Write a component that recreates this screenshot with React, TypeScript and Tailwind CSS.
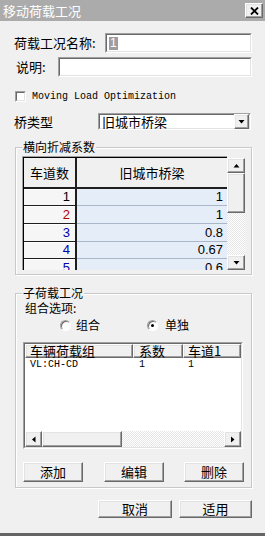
const cjk = "font-['Noto_Sans_CJK_SC',sans-serif]";
const mono = "font-['Liberation_Mono','Noto_Sans_CJK_SC',monospace]";
const arial = "font-['Liberation_Sans',Arial,sans-serif]";

const raised =
  'border border-t-white border-l-white border-r-[#696969] border-b-[#696969] shadow-[inset_-1px_-1px_0_#a0a0a0,inset_1px_1px_0_#e3e3e3] bg-[#f0f0f0]';
const sunkenOuter = 'border border-t-[#a0a0a0] border-l-[#a0a0a0] border-r-white border-b-white';
const sunkenInner = 'border border-t-[#696969] border-l-[#696969] border-r-[#e3e3e3] border-b-[#e3e3e3]';
const track =
  'bg-[repeating-conic-gradient(#ffffff_0%_25%,#e6e6e6_0%_50%)] bg-[length:2px_2px]';

function Arrow({ dir }: { dir: 'up' | 'down' | 'left' | 'right' }) {
  const d = {
    up: 'M0.5 4.5 L3.5 1 L6.5 4.5 Z',
    down: 'M0.5 1 L3.5 4.5 L6.5 1 Z',
    left: 'M4.5 0.5 L1 3.5 L4.5 6.5 Z',
    right: 'M1 0.5 L4.5 3.5 L1 6.5 Z',
  }[dir];
  const v = dir === 'up' || dir === 'down';
  return (
    <svg width={v ? 7 : 5} height={v ? 5 : 7} viewBox={v ? '0 0 7 5' : '0 0 5 7'}>
      <path d={d} fill="black" />
    </svg>
  );
}

function Sunken({ className, children }: { className: string; children?: React.ReactNode }) {
  return (
    <div className={`${sunkenOuter} ${className}`}>
      <div className={`${sunkenInner} w-full h-full bg-white relative`}>{children}</div>
    </div>
  );
}

function Radio({ checked }: { checked?: boolean }) {
  return (
    <div className="w-[11px] h-[11px] rounded-full border border-t-[#a0a0a0] border-l-[#a0a0a0] border-r-white border-b-white bg-white flex items-center justify-center shadow-[inset_1px_1px_0_#696969]">
      {checked && <div className="w-[3px] h-[3px] rounded-full bg-black" />}
    </div>
  );
}

const rows = [
  { n: '1', v: '1', c: 'text-black', h: 'h-[17px]' },
  { n: '2', v: '1', c: 'text-[#b00000]', h: 'h-[18px]' },
  { n: '3', v: '0.8', c: 'text-[#0000b0]', h: 'h-[18px]' },
  { n: '4', v: '0.67', c: 'text-[#0000b0]', h: 'h-[17px]' },
  { n: '5', v: '0.6', c: 'text-[#0000b0]', h: 'h-[18px]' },
];

export default function App() {
  return (
    <div className={`w-[265px] h-[536px] bg-[#f0f0f0] flex flex-col overflow-hidden text-black ${cjk}`}>
      {/* title bar */}
      <div className="h-[21px] shrink-0 bg-[#ababab] flex items-center justify-between pl-[3px] pr-[2px]">
        <span className="text-white text-[13px] leading-[21px]">移动荷载工况</span>
        <div className={`w-[18px] h-[15px] ${raised} flex items-center justify-center`}>
          <svg width="9" height="8" viewBox="0 0 9 8">
            <path d="M1 0.5 L8 7.5 M8 0.5 L1 7.5" stroke="black" strokeWidth="1.8" />
          </svg>
        </div>
      </div>

      {/* name */}
      <div className="flex items-center h-[20px] mt-[12px]">
        <span className="w-[105px] pl-[14px] shrink-0 whitespace-nowrap text-[13px] leading-[20px]">荷载工况名称:</span>
        <Sunken className="w-[147px] h-[20px]">
          <div className="h-full flex items-center pl-[2px]">
            <span className={`bg-[#9d9d9d] text-white text-[12px] leading-[13px] px-[1px] ${arial}`}>1</span>
          </div>
        </Sunken>
      </div>

      {/* description */}
      <div className="flex items-center h-[20px] mt-[4px]">
        <span className="w-[58px] pl-[16px] shrink-0 whitespace-nowrap text-[13px] leading-[20px]">说明:</span>
        <Sunken className="w-[194px] h-[20px]" />
      </div>

      {/* checkbox */}
      <div className="flex items-center h-[11px] mt-[14px]">
        <Sunken className="ml-[15px] w-[11px] h-[11px]" />
        <span className={`ml-[6px] text-[10px] leading-[11px] ${mono}`}>Moving Load Optimization</span>
      </div>

      {/* bridge type */}
      <div className="flex items-center h-[17px] mt-[11px]">
        <span className="w-[98px] pl-[14px] shrink-0 text-[13px] leading-[17px]">桥类型</span>
        <Sunken className="w-[153px] h-[17px]">
          <div className="h-full flex items-center justify-between">
            <span className="pl-[2px] text-[13px] leading-[15px]">旧城市桥梁</span>
            <div className={`w-[15px] h-[15px] ${raised} flex items-center justify-center`}>
              <Arrow dir="down" />
            </div>
          </div>
        </Sunken>
      </div>

      {/* lateral reduction factors */}
      <div className="relative mt-[17px] ml-[15px] w-[237px] h-[128px] shrink-0 border border-[#c8c8c8] shadow-[inset_1px_1px_0_#ffffff,1px_1px_0_#ffffff]">
        <span className="absolute -top-[8px] left-[6px] bg-[#f0f0f0] px-[1px] text-[12px] leading-[14px]">横向折减系数</span>
        <div className="mt-[8px] ml-[6px] flex w-[223px] h-[114px]">
          <div className="w-[205px] h-[114px] border-l border-t border-[#a0a0a0] overflow-hidden">
            <div className="border-l border-t border-black h-full">
              <div className="flex h-[31px]">
                <div className="w-[53px] bg-[#f0f0f0] border-r-2 border-b-2 border-[#1e1e1e] flex items-center justify-center text-[13px]">
                  车道数
                </div>
                <div className="flex-1 bg-[#f0f0f0] border-b-2 border-[#1e1e1e] flex items-center justify-center text-[13px]">
                  旧城市桥梁
                </div>
              </div>
              {rows.map(r => (
                <div key={r.n} className={`flex ${r.h} ${arial} text-[13px]`}>
                  <div className={`w-[53px] bg-[#f6f6f6] border-r-2 border-b border-[#1e1e1e] shadow-[inset_0_1px_0_#ffffff] flex items-center justify-end pr-[5px] ${r.c}`}>
                    {r.n}
                  </div>
                  <div className="flex-1 bg-[#e5edf9] border-b border-[#aab7cb] flex items-center justify-end pr-[4px]">
                    {r.v}
                  </div>
                </div>
              ))}
            </div>
          </div>
          <div className="w-[18px] h-[114px] flex flex-col pt-[2px]">
            <div className={`h-[15px] ${raised} flex items-center justify-center`}>
              <Arrow dir="up" />
            </div>
            <div className={`h-[40px] ${raised}`} />
            <div className={`flex-1 ${track}`} />
            <div className={`h-[15px] ${raised} flex items-center justify-center`}>
              <Arrow dir="down" />
            </div>
          </div>
        </div>
      </div>

      {/* sub load cases */}
      <div className="relative mt-[18px] ml-[15px] w-[237px] h-[195px] shrink-0 border border-[#c8c8c8] shadow-[inset_1px_1px_0_#ffffff,1px_1px_0_#ffffff]">
        <span className="absolute -top-[8px] left-[6px] bg-[#f0f0f0] px-[1px] text-[12px] leading-[14px]">子荷载工况</span>
        <div className="mt-[7px] ml-[9px] h-[14px] text-[12px] leading-[14px]">组合选项:</div>
        <div className="mt-[4px] h-[12px] flex items-center text-[12px]">
          <div className="ml-[44px]">
            <Radio />
          </div>
          <span className="ml-[5px] leading-[12px]">组合</span>
          <div className="ml-[47px]">
            <Radio checked />
          </div>
          <span className="ml-[7px] leading-[12px]">单独</span>
        </div>
        <Sunken className="mt-[11px] ml-[7px] w-[220px] h-[107px]">
          <div className="flex flex-col h-full">
            <div className="flex h-[14px] text-[13px] leading-[12px]">
              <div className={`w-[108px] ${raised} pl-[4px]`}>车辆荷载组</div>
              <div className={`w-[50px] ${raised} pl-[5px]`}>系数</div>
              <div className={`w-[58px] ${raised} pl-[4px]`}>车道1</div>
            </div>
            <div className={`flex h-[14px] text-[10px] leading-[14px] ${mono}`}>
              <div className="w-[108px] pl-[5px]">VL:CH-CD</div>
              <div className="w-[50px] pl-[6px]">1</div>
              <div className="w-[58px] pl-[5px]">1</div>
            </div>
            <div className="flex-1" />
            <div className="flex h-[16px]">
              <div className={`w-[17px] ${raised} flex items-center justify-center`}>
                <Arrow dir="left" />
              </div>
              <div className={`w-[80px] ${raised}`} />
              <div className={`flex-1 ${track}`} />
              <div className={`w-[17px] ${raised} flex items-center justify-center`}>
                <Arrow dir="right" />
              </div>
            </div>
          </div>
        </Sunken>
        <div className="mt-[13px] ml-[7px] flex text-[13px]">
          <button className={`w-[60px] h-[20px] ${raised} leading-[18px]`}>添加</button>
          <button className={`ml-[21px] w-[60px] h-[20px] ${raised} leading-[18px]`}>编辑</button>
          <button className={`ml-[20px] w-[60px] h-[20px] ${raised} leading-[18px]`}>删除</button>
        </div>
      </div>

      {/* dialog buttons */}
      <div className="mt-[12px] flex justify-end pr-[13px] text-[13px]">
        <button className={`w-[74px] h-[18px] ${raised} leading-[16px]`}>取消</button>
        <button className={`ml-[7px] w-[73px] h-[18px] ${raised} leading-[16px]`}>适用</button>
      </div>

      <div className="mt-auto h-[3px] bg-[#646464] shrink-0" />
    </div>
  );
}
